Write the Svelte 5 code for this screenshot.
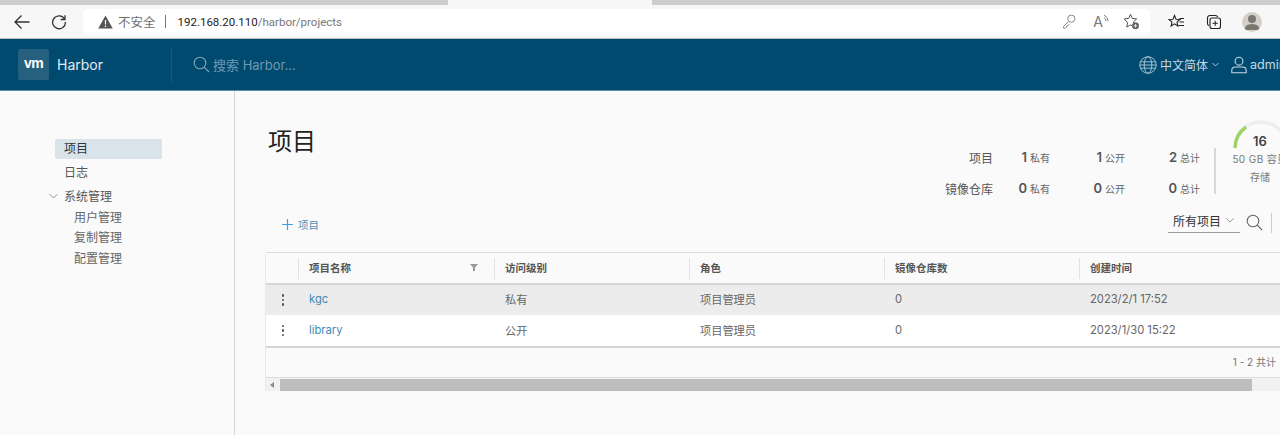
<script>
  const stats = [
    { label: '项目', cells: [['1', '私有'], ['1', '公开'], ['2', '总计']] },
    { label: '镜像仓库', cells: [['0', '私有'], ['0', '公开'], ['0', '总计']] }
  ];
  const columns = ['项目名称', '访问级别', '角色', '镜像仓库数', '创建时间'];
  const rows = [
    { name: 'kgc', access: '私有', role: '项目管理员', repos: 0, created: '2023/2/1 17:52' },
    { name: 'library', access: '公开', role: '项目管理员', repos: 0, created: '2023/1/30 15:22' }
  ];
  const adminLinks = ['用户管理', '复制管理', '配置管理'];
</script>

<div class="page">
  <div class="tabstrip"><div class="tab"></div></div>

  <div class="toolbar">
    <svg class="back" width="18" height="16" viewBox="0 0 18 16"><path d="M16.5 8H2M8.5 1.5 2 8l6.5 6.5" fill="none" stroke="#333" stroke-width="1.3"/></svg>
    <svg class="reload" width="16" height="16" viewBox="0 0 16 16"><path d="M13.6 5.2A6.4 6.4 0 1 0 14.4 8M14 1.2v4.3H9.7" fill="none" stroke="#333" stroke-width="1.3"/></svg>
    <div class="omnibox">
      <svg class="warn" width="15" height="14" viewBox="0 0 15 14"><path d="M7.5.5 14.8 13.5H.2Z" fill="#555"/><path d="M7.5 5v4.5M7.5 10.5v1.5" stroke="#fff" stroke-width="1.2"/></svg>
      <span class="insecure">不安全</span>
      <span class="pipe"></span>
      <span class="url"><b>192.168.20.110</b>/harbor/projects</span>
      <span class="grow"></span>
      <svg class="omni-ico" width="14" height="15" viewBox="0 0 14 15"><circle cx="9.3" cy="4.7" r="3.6" fill="none" stroke="#8a8a8a"/><path d="M6.6 7.4 1.5 12.5v1.6h2l1-1v-1.2h1.2l1.8-2" fill="none" stroke="#8a8a8a"/></svg>
      <span class="read">A<svg width="7" height="9" viewBox="0 0 7 9"><path d="M1 1q4 2 4 6M1 3.5q2 1 2 3.5" fill="none" stroke="#777" stroke-width=".9"/></svg></span>
      <svg class="omni-ico star" width="17" height="17" viewBox="0 0 17 17"><path d="M7.5 1.3 9.3 5.4l4.4.5-3.3 3 .6 2-1 2.4-2.5-1.4-3.8 2.2.9-4.3L1.3 5.900l4.4-.5Z" fill="none" stroke="#555"/><circle cx="12.5" cy="12.8" r="3.5" fill="#666"/><path d="M10.8 12.8h3.4M12.5 11.1v3.4" stroke="#fff" stroke-width=".8"/></svg>
    </div>
    <svg class="favs" width="17" height="16" viewBox="0 0 17 16"><path d="M6.5 1.5 8 5.2l4 .3-3 2.6.9 3.9-3.4-2.1-3.4 2.1.9-3.9-3-2.6 4-.3Z" fill="none" stroke="#222" stroke-width="1.1"/><path d="M11.5 4.5h4.5M11.5 8h4.5M10.5 11.5h5.5" stroke="#222"/></svg>
    <svg class="coll" width="16" height="16" viewBox="0 0 16 16"><path d="M3 11.5A2 2 0 0 1 1.5 9.5V4A2.5 2.5 0 0 1 4 1.5h5.5A2 2 0 0 1 11.5 3" fill="none" stroke="#222" stroke-width="1.1"/><rect x="4" y="4" width="10.5" height="10.5" rx="2" fill="none" stroke="#222" stroke-width="1.1"/><path d="M9.2 6.7v5.2M6.6 9.3h5.2" stroke="#222"/></svg>
    <div class="avatar">
      <svg width="20" height="20" viewBox="0 0 20 20"><circle cx="10" cy="7" r="4" fill="#7a7670"/><path d="M2.5 18q0-6 7.5-6t7.5 6Z" fill="#7a7670"/></svg>
    </div>
  </div>

  <header class="navbar">
    <div class="brand">
      <div class="logo">vm</div>
      <span class="brand-name">Harbor</span>
    </div>
    <div class="search">
      <svg width="17" height="17" viewBox="0 0 17 17"><circle cx="7" cy="7" r="5.8" fill="none" stroke="#7fa6bc" stroke-width="1.1"/><path d="m11.2 11.2 4.8 4.8" stroke="#7fa6bc" stroke-width="1.1"/></svg>
      <span>搜索 Harbor...</span>
    </div>
    <div class="nav-right">
      <svg width="18" height="18" viewBox="0 0 17 17" fill="none" stroke="#a9c6d6" stroke-width=".9"><circle cx="8.5" cy="8.5" r="7.8"/><ellipse cx="8.5" cy="8.5" rx="3.6" ry="7.8"/><path d="M1.5 5.5h14M.8 8.5h15.4M1.5 11.5h14"/></svg>
      <span class="lang">中文简体</span>
      <svg class="caret" width="7" height="5" viewBox="0 0 7 5"><path d="m.5 1 3 3 3-3" fill="none" stroke="#a9c6d6"/></svg>
      <svg class="user" width="16" height="18" viewBox="0 0 16 17" fill="none" stroke="#c6dae5" stroke-width="1.1"><circle cx="8" cy="4.7" r="3.9"/><path d="M.8 16.2v-2.4q0-3.3 3.7-3.3h7q3.7 0 3.7 3.3v2.4Z"/></svg>
      <span class="admin">admin</span>
    </div>
  </header>

  <div class="body">
    <nav class="sidebar">
      <a class="item active" href="#projects">项目</a>
      <a class="item" href="#logs">日志</a>
      <div class="item group">
        <svg width="9" height="6" viewBox="0 0 9 6"><path d="m.5 1 4 4 4-4" fill="none" stroke="#999"/></svg>
        系统管理
      </div>
      {#each adminLinks as link}
        <a class="sub" href="#admin">{link}</a>
      {/each}
    </nav>

    <main class="content">
      <div class="top">
        <h1>项目</h1>
        <div class="summary">
          <div class="stats">
            {#each stats as row}
              <div class="stat-row">
                <span class="stat-label">{row.label}</span>
                {#each row.cells as cell}
                  <span class="stat-cell"><b>{cell[0]}</b><small>{cell[1]}</small></span>
                {/each}
              </div>
            {/each}
          </div>
          <div class="quota">
            <svg class="gauge" width="64" height="34" viewBox="0 0 64 34">
              <path d="M5 28A26 26 0 0 1 57 28" fill="none" stroke="#eee" stroke-width="3.5"/>
              <path d="M5 28A26 26 0 0 1 16 7" fill="none" stroke="#9ed36a" stroke-width="3.5"/>
            </svg>
            <b>16</b>
            <span class="cap">50 GB 容量</span>
            <span class="store">存储</span>
          </div>
        </div>
      </div>

      <div class="actions">
        <button class="add">
          <svg width="11" height="11" viewBox="0 0 11 11"><path d="M5.5 0v11M0 5.5h11" stroke="#3fa0dc" stroke-width="1.2"/></svg>
          项目
        </button>
        <span class="grow"></span>
        <div class="filter">所有项目
          <svg width="8" height="5" viewBox="0 0 8 5"><path d="m.5.5 3.5 3.5L7.5.5" fill="none" stroke="#999"/></svg>
        </div>
        <svg class="find" width="17" height="17" viewBox="0 0 17 17"><circle cx="7" cy="7" r="5.8" fill="none" stroke="#666" stroke-width="1.1"/><path d="m11.2 11.2 4.8 4.8" stroke="#666" stroke-width="1.1"/></svg>
        <span class="action-sep"></span>
      </div>

      <div class="grid">
        <div class="thead">
          <div class="cell-action"></div>
          {#each columns as col, i}
            <div class="th">
              {col}
              {#if i === 0}
                <svg class="funnel" width="8" height="7" viewBox="0 0 8 7"><path d="M0 0h8L5 3.5V7H3V3.5Z" fill="#999"/></svg>
              {/if}
            </div>
          {/each}
        </div>
        {#each rows as row, i}
          <div class="tr" class:shaded={i === 0}>
            <div class="cell-action"><span class="dots"><i></i><i></i><i></i></span></div>
            <div class="td"><a href="#project">{row.name}</a></div>
            <div class="td">{row.access}</div>
            <div class="td">{row.role}</div>
            <div class="td">{row.repos}</div>
            <div class="td">{row.created}</div>
          </div>
        {/each}
        <div class="tfoot">1 - 2 共计</div>
        <div class="scrollbar">
          <svg width="4" height="6" viewBox="0 0 4 6"><path d="M4 0v6L0 3Z" fill="#888"/></svg>
          <div class="thumb"></div>
        </div>
      </div>
    </main>
  </div>
</div>

<style>
  :global(body) {
    margin: 0;
    background: #fafafa;
  }

  svg {
    flex: none;
  }

  .page {
    width: 1280px;
    height: 435px;
    overflow: hidden;
    display: flex;
    flex-direction: column;
    font-family: Inter, 'Noto Sans CJK SC', sans-serif;
    color: #565656;
    background: #fafafa;
  }

  .tabstrip {
    height: 5px;
    flex: none;
    background: #cdcdcd;
    padding-left: 448px;
  }

  .tab {
    width: 204px;
    height: 5px;
    background: #f7f7f7;
  }

  .toolbar {
    height: 33px;
    flex: none;
    display: flex;
    align-items: center;
    background: #f7f7f7;
    border-bottom: 1px solid #bdbdbd;
  }

  .back { margin-left: 13px; }
  .reload { margin-left: 20px; }

  .omnibox {
    margin-left: 16px;
    width: 1067px;
    height: 26px;
    background: #fff;
    border-radius: 5px;
    display: flex;
    align-items: center;
    font-size: 12.5px;
  }

  .warn { margin-left: 15px; }

  .insecure {
    margin-left: 5px;
    color: #6f6f6f;
  }

  .pipe {
    width: 1px;
    height: 13px;
    margin-left: 9px;
    background: #777;
  }

  .url {
    margin-left: 12px;
    font-family: Roboto, sans-serif;
    font-size: 11.5px;
    color: #777;
  }

  .url b {
    font-weight: 400;
    color: #222;
  }

  .grow { flex: 1; }

  .read {
    margin-left: 17px;
    display: flex;
    align-items: flex-start;
    color: #777;
    font-size: 14px;
    line-height: 15px;
  }

  .star {
    margin-left: 13px;
    margin-right: 10px;
  }

  .favs { margin-left: 18px; }
  .coll { margin-left: 21px; }

  .avatar {
    margin-left: 20px;
    width: 20px;
    height: 20px;
    border-radius: 50%;
    background: #d4d0c9;
    overflow: hidden;
    display: flex;
  }

  .navbar {
    height: 51px;
    flex: none;
    display: flex;
    align-items: center;
    background: #004a70;
    border-bottom: 1px solid #5d8ea8;
    color: #fff;
  }

  .brand {
    width: 172px;
    height: 34px;
    flex: none;
    box-sizing: border-box;
    display: flex;
    align-items: center;
    padding-left: 18px;
    border-right: 1px solid #135a7e;
  }

  .logo {
    width: 31px;
    height: 31px;
    border-radius: 2px;
    background: #26607f;
    font: 700 14px/29px 'Liberation Sans', sans-serif;
    letter-spacing: -0.5px;
    text-align: center;
  }

  .brand-name {
    margin-left: 8px;
    font-size: 14px;
    color: #e3edf2;
  }

  .search {
    margin-left: 21px;
    display: flex;
    align-items: center;
    gap: 3px;
    font-size: 13px;
    color: #6e99b2;
  }

  .nav-right {
    margin-left: auto;
    display: flex;
    align-items: center;
    width: 141px;
    flex: none;
    font-size: 12px;
    color: #c6dae5;
    white-space: nowrap;
  }

  .lang { margin-left: 3px; }
  .caret { margin-left: 4px; }
  .user { margin-left: 12px; }

  .admin {
    margin-left: 3px;
    font-size: 12.5px;
  }

  .body {
    flex: 1;
    display: flex;
    min-height: 0;
  }

  .sidebar {
    width: 235px;
    flex: none;
    box-sizing: border-box;
    border-right: 1px solid #d4d4d4;
    padding: 48px 72px 0 55px;
    display: flex;
    flex-direction: column;
    font-size: 12px;
  }

  .item {
    height: 20px;
    line-height: 19px;
    padding-left: 9px;
    margin-bottom: 4px;
    color: #565656;
    text-decoration: none;
    position: relative;
  }

  .active {
    background: #d8e3ea;
    border-radius: 2px 0 0 2px;
    color: #333;
  }

  .group { margin-bottom: 0; }

  .group svg {
    position: absolute;
    left: -6px;
    top: 6px;
  }

  .sub {
    height: 20.4px;
    line-height: 21px;
    padding-left: 19px;
    color: #666;
    text-decoration: none;
  }

  .content {
    flex: 1;
    min-width: 0;
    padding: 0 0 0 31px;
  }

  .top {
    height: 122px;
    display: flex;
    justify-content: space-between;
    align-items: flex-start;
  }

  h1 {
    margin: 33px 0 0 2px;
    font-size: 24px;
    line-height: 36px;
    font-weight: 400;
    color: #222;
  }

  .summary {
    display: flex;
    align-items: flex-start;
    width: 336px;
    flex: none;
    margin-right: -1px;
  }

  .stats {
    width: 269px;
    flex: none;
    margin-top: 57px;
    height: 46px;
    border-right: 2px solid #d8d8d8;
  }

  .stat-row {
    display: grid;
    grid-template-columns: 48px 22px 75px 75px 1fr;
    height: 31px;
    align-items: start;
  }

  .stat-label {
    grid-column: 1;
    text-align: right;
    font-size: 12px;
    line-height: 22px;
    white-space: nowrap;
    direction: rtl;
  }

  .stat-cell {
    display: flex;
    align-items: center;
    gap: 3px;
    height: 18px;
  }

  .stat-cell:nth-child(2) { grid-column: 3; }
  .stat-cell:nth-child(3) { grid-column: 4; }
  .stat-cell:nth-child(4) { grid-column: 5; }

  .stat-cell b {
    width: 12px;
    text-align: right;
    font-size: 13px;
    font-weight: 600;
    color: #565656;
  }

  .stat-cell small {
    font-size: 10px;
    color: #666;
  }

  .quota {
    position: relative;
    width: 64px;
    flex: none;
    padding-top: 41px;
    margin-left: 12px;
    display: flex;
    flex-direction: column;
    align-items: center;
    white-space: nowrap;
  }

  .gauge {
    position: absolute;
    left: 2px;
    top: 29px;
  }

  .quota b {
    font-size: 13px;
    font-weight: 600;
    line-height: 18px;
    color: #444;
  }

  .cap {
    font-size: 10px;
    line-height: 18px;
    letter-spacing: 0.4px;
    color: #777;
  }

  .store {
    font-size: 10px;
    line-height: 19px;
    color: #777;
  }

  .actions {
    height: 40px;
    display: flex;
    align-items: center;
    margin-top: -10px;
  }

  .add {
    margin: 3px 0 0 16px;
    padding: 0;
    border: 0;
    background: none;
    display: flex;
    align-items: center;
    gap: 5px;
    font: 10.5px Inter, 'Noto Sans CJK SC', sans-serif;
    color: #4a90b8;
  }

  .filter {
    width: 72px;
    height: 21px;
    box-sizing: border-box;
    padding: 0 0 3px 5px;
    border-bottom: 1px solid #9a9a9a;
    display: flex;
    align-items: center;
    gap: 5px;
    font-size: 12px;
    color: #333;
    margin-top: -2px;
  }

  .find {
    margin: -2px 0 0 6px;
  }

  .action-sep {
    width: 1px;
    height: 20px;
    margin: 0 8px;
    background: #ccc;
  }

  .grid {
    margin-top: 9px;
    width: 1040px;
    border-radius: 3px 3px 0 0;
    font-size: 11.2px;
    box-shadow: -1px 0 0 #eaeaea;
  }

  .thead {
    height: 30px;
    display: flex;
    align-items: center;
    background: #fafafa;
    border-top: 1px solid #dcdcdc;
    border-bottom: 2px solid #d6d6d6;
    font-weight: 600;
    font-size: 10.5px;
  }

  .cell-action {
    width: 32px;
    flex: none;
    align-self: stretch;
    display: flex;
    align-items: center;
    justify-content: center;
  }

  .th {
    width: 195px;
    box-sizing: border-box;
    flex: none;
    height: 21px;
    display: flex;
    align-items: center;
    justify-content: space-between;
    padding: 0 16px 1px 10px;
    border-left: 1px solid #e2e2e2;
  }

  .th:nth-child(2),
  .td:nth-child(2) {
    width: 196px;
  }

  .tr {
    height: 31px;
    display: flex;
    align-items: center;
    background: #fff;
  }

  .tr.shaded {
    height: 30px;
    background: #ececec;
  }

  .td {
    width: 195px;
    box-sizing: border-box;
    flex: none;
    padding: 0 0 2px 11px;
    color: #666;
  }

  .td a {
    color: #3f8ab5;
    text-decoration: none;
  }

  .dots {
    display: flex;
    flex-direction: column;
    gap: 2px;
    margin-left: 2px;
  }

  .dots i {
    width: 2.5px;
    height: 2.5px;
    border-radius: 50%;
    background: #555;
  }

  .tfoot {
    height: 29px;
    border-top: 2px solid #d6d6d6;
    border-bottom: 1px solid #dcdcdc;
    width: 1010px;
    padding-right: 4px;
    text-align: right;
    line-height: 28px;
    font-size: 10px;
    color: #777;
  }

  .scrollbar {
    height: 13px;
    background: #f1f1f1;
    width: 1014px;
    display: flex;
    align-items: center;
    padding-left: 4px;
    box-sizing: border-box;
  }

  .thumb {
    margin-left: 6px;
    width: 972px;
    height: 12px;
    background: #bdbdbd;
  }
</style>
